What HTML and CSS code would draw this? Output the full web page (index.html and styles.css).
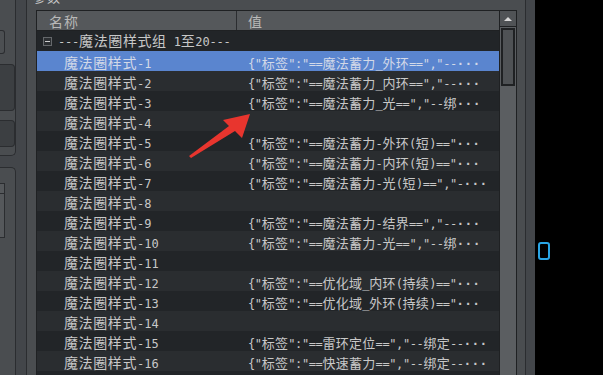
FILE: index.html
```html
<!DOCTYPE html>
<html lang="zh-CN">
<head>
<meta charset="utf-8">
<title>参数</title>
<link rel="stylesheet" href="styles.css">
</head>
<body>
<div class="app">
  <aside class="dock">
    <div class="dock-top">
      <div class="btn-a"></div>
      <div class="btn-b"></div>
      <div class="btn-c"></div>
    </div>
    <div class="dock-bottom">
      <div class="mini"><div class="mini-head"></div></div>
    </div>
  </aside>
  <div class="strip"></div>
  <section class="group">
    <div class="group-title"><span>参数</span></div>
    <div class="frame">
      <div class="list">
        <div class="head">
          <div class="hc name">名称</div>
          <div class="hc val">值</div>
        </div>
        <div class="rows">
          <div class="row grp"><div class="name"><span class="toggle"></span><span>---<span class="h">魔法圈样式组</span> 1<span class="h">至</span>20---</span></div></div>
          <div class="row sel"><div class="name"><span class="h">魔法圈样式</span>-1</div><div class="val">{"<span class="h">标签</span>":"==<span class="h">魔法蓄力</span>_<span class="h">外环</span>==","--<span class="ell">···</span></div></div>
          <div class="row"><div class="name"><span class="h">魔法圈样式</span>-2</div><div class="val">{"<span class="h">标签</span>":"==<span class="h">魔法蓄力</span>_<span class="h">内环</span>==","--<span class="ell">···</span></div></div>
          <div class="row"><div class="name"><span class="h">魔法圈样式</span>-3</div><div class="val">{"<span class="h">标签</span>":"==<span class="h">魔法蓄力</span>_<span class="h">光</span>==","--<span class="h">绑</span><span class="ell">···</span></div></div>
          <div class="row"><div class="name"><span class="h">魔法圈样式</span>-4</div><div class="val"></div></div>
          <div class="row"><div class="name"><span class="h">魔法圈样式</span>-5</div><div class="val">{"<span class="h">标签</span>":"==<span class="h">魔法蓄力</span>-<span class="h">外环</span>(<span class="h">短</span>)=="<span class="ell">···</span></div></div>
          <div class="row"><div class="name"><span class="h">魔法圈样式</span>-6</div><div class="val">{"<span class="h">标签</span>":"==<span class="h">魔法蓄力</span>-<span class="h">内环</span>(<span class="h">短</span>)=="<span class="ell">···</span></div></div>
          <div class="row"><div class="name"><span class="h">魔法圈样式</span>-7</div><div class="val">{"<span class="h">标签</span>":"==<span class="h">魔法蓄力</span>-<span class="h">光</span>(<span class="h">短</span>)==","-<span class="ell">···</span></div></div>
          <div class="row"><div class="name"><span class="h">魔法圈样式</span>-8</div><div class="val"></div></div>
          <div class="row"><div class="name"><span class="h">魔法圈样式</span>-9</div><div class="val">{"<span class="h">标签</span>":"==<span class="h">魔法蓄力</span>-<span class="h">结界</span>==","--<span class="ell">···</span></div></div>
          <div class="row"><div class="name"><span class="h">魔法圈样式</span>-10</div><div class="val">{"<span class="h">标签</span>":"==<span class="h">魔法蓄力</span>-<span class="h">光</span>==","--<span class="h">绑</span><span class="ell">···</span></div></div>
          <div class="row"><div class="name"><span class="h">魔法圈样式</span>-11</div><div class="val"></div></div>
          <div class="row"><div class="name"><span class="h">魔法圈样式</span>-12</div><div class="val">{"<span class="h">标签</span>":"==<span class="h">优化域</span>_<span class="h">内环</span>(<span class="h">持续</span>)=="<span class="ell">···</span></div></div>
          <div class="row"><div class="name"><span class="h">魔法圈样式</span>-13</div><div class="val">{"<span class="h">标签</span>":"==<span class="h">优化域</span>_<span class="h">外环</span>(<span class="h">持续</span>)=="<span class="ell">···</span></div></div>
          <div class="row"><div class="name"><span class="h">魔法圈样式</span>-14</div><div class="val"></div></div>
          <div class="row"><div class="name"><span class="h">魔法圈样式</span>-15</div><div class="val">{"<span class="h">标签</span>":"==<span class="h">雷环定位</span>==","--<span class="h">绑定</span>--<span class="ell">···</span></div></div>
          <div class="row"><div class="name"><span class="h">魔法圈样式</span>-16</div><div class="val">{"<span class="h">标签</span>":"==<span class="h">快速蓄力</span>==","--<span class="h">绑定</span>--<span class="ell">···</span></div></div>
          <div class="row"><div class="name"></div><div class="val"></div></div>
        </div>
      </div>
      <div class="vscroll">
        <div class="up"></div>
        <div class="track"><div class="thumb"></div></div>
      </div>
    </div>
  </section>
  <div class="strip strip-r"></div>
  <div class="canvas"><div class="blue-icon"></div></div>
</div>
<svg class="arrow" width="603" height="375" viewBox="0 0 603 375" aria-hidden="true">
  <polygon points="189,156 229,126 223,120 250,114 242,138 235,131 191,158" fill="#e8352e"/>
</svg>
</body>
</html>
```

FILE: styles.css
```css
* { box-sizing: border-box; }

body {
  margin: 0;
  width: 603px;
  height: 375px;
  overflow: hidden;
  background: #000;
  font-family: "DejaVu Sans Mono", "Noto Sans CJK SC", monospace;
  position: relative;
}

.app {
  display: flex;
  height: 375px;
}

/* left dock */
.dock {
  width: 16px;
  flex: none;
  display: flex;
  flex-direction: column;
  background: #43464a;
}
.dock-top {
  height: 156px;
  flex: none;
  background: #4a4d50;
  border-right: 1px solid #2b2d30;
  border-bottom: 1px solid #2b2d30;
  border-bottom-right-radius: 5px;
  padding-top: 30px;
  display: flex;
  flex-direction: column;
}
.btn-a {
  width: 5px;
  height: 24px;
  flex: none;
  border: 1px solid #2b2d30;
  border-left: none;
  border-radius: 0 3px 3px 0;
  background: #4c4f52;
  margin-bottom: 10px;
}
.btn-b, .btn-c {
  width: 15px;
  flex: none;
  border: 1px solid #2b2d30;
  border-left: none;
  border-radius: 0 4px 4px 0;
  background: #3c3f42;
}
.btn-b { height: 47px; margin-bottom: 9px; }
.btn-c { height: 27px; }

.dock-bottom {
  margin-top: 11px;
  flex: 1;
  background: #4a4d50;
  border-right: 1px solid #2b2d30;
  border-top: 1px solid #2b2d30;
  border-top-right-radius: 5px;
  padding-top: 15px;
}
.mini {
  width: 5px;
  height: 55px;
  border: 1px solid #2b2d30;
  border-left: none;
  background: #55585b;
}
.mini-head {
  height: 10px;
  border-bottom: 1px solid #2b2d30;
}

.strip {
  width: 10px;
  flex: none;
  background: #43464a;
}
.strip-r { width: 9px; }

/* parameter group */
.group {
  width: 500px;
  flex: none;
  background: #4a4d50;
  border-left: 1px solid #2b2d30;
  border-right: 1px solid #2b2d30;
  padding: 0 8px 0 9px;
  display: flex;
  flex-direction: column;
  overflow: hidden;
}
.group-title {
  height: 10px;
  flex: none;
  color: #c8c8c8;
  font-family: "Noto Sans CJK SC", sans-serif;
  font-size: 13px;
  margin-left: -3px;
  letter-spacing: 1px;
}
.group-title span {
  display: block;
  line-height: 14px;
  margin-top: -10px;
}

.frame {
  flex: 1;
  min-height: 0;
  display: flex;
  border: 1px solid #1f2123;
  border-bottom: none;
  background: #222528;
  overflow: hidden;
}
.list {
  width: 462px;
  flex: none;
  display: flex;
  flex-direction: column;
  overflow: hidden;
}
.head {
  display: flex;
  height: 20px;
  flex: none;
  background: #55585b;
  border-bottom: 1px solid #1f2123;
  color: #b8b8b8;
  font-family: "Noto Sans CJK SC", sans-serif;
  font-size: 14px;
  line-height: 20px;
}
.hc.name {
  width: 200px;
  border-right: 1px solid #2b2d30;
  padding-left: 12px;
  letter-spacing: 1px;
}
.hc.val { padding-left: 11px; }

.rows { flex: none; }

.row {
  display: flex;
  height: 20px;
  line-height: 23px;
  font-size: 12px;
  color: #c8c8c8;
  white-space: nowrap;
}
.row:nth-child(2n+3) { background: #2a2d30; }
.row.sel { background: #5a85cf; color: #d2d9e8; }

.h {
  font-family: "Noto Sans CJK SC", sans-serif;
}
.row .name {
  width: 200px;
  flex: none;
  padding-left: 27px;
  overflow: hidden;
}
.row .name .h {
  font-size: 14px;
  letter-spacing: 0.6px;
}
.row .val {
  width: 262px;
  padding-left: 11px;
  overflow: hidden;
  letter-spacing: -0.4px;
}
.row .val .h {
  font-size: 13px;
  letter-spacing: 0.3px;
}
.ell {
  font-weight: bold;
  letter-spacing: 0.8px;
}
.row.grp .name {
  width: 300px;
  padding-left: 6px;
  display: flex;
  align-items: center;
  gap: 6px;
  letter-spacing: -0.2px;
  line-height: 20px;
}
.toggle {
  width: 9px;
  height: 9px;
  flex: none;
  border: 1px solid #65686b;
  background: #2c2f32;
  display: flex;
  align-items: center;
  justify-content: center;
}
.toggle::before {
  content: "";
  width: 5px;
  height: 1px;
  background: #cfcfcf;
}

/* scrollbar */
.vscroll {
  width: 17px;
  flex: none;
  border-left: 1px solid #1f2123;
  background: #5b5e61;
  display: flex;
  flex-direction: column;
}
.up {
  height: 16px;
  flex: none;
  background: #505356;
  border-bottom: 1px solid #1f2123;
  display: flex;
  align-items: center;
  justify-content: center;
}
.up::before {
  content: "";
  border-left: 4px solid transparent;
  border-right: 4px solid transparent;
  border-bottom: 4px solid #d8d8d8;
}
.thumb {
  margin: 1px 1px 0 1px;
  height: 58px;
  border: 2px solid #1f2123;
  background: #4f5255;
}

/* right canvas */
.canvas {
  flex: 1;
  background: #000;
  padding: 242px 0 0 3px;
}
.blue-icon {
  width: 12px;
  height: 18px;
  border: 2px solid #2aa5e5;
  border-radius: 3px;
}

.arrow {
  position: absolute;
  left: 0;
  top: 0;
  pointer-events: none;
}
```
